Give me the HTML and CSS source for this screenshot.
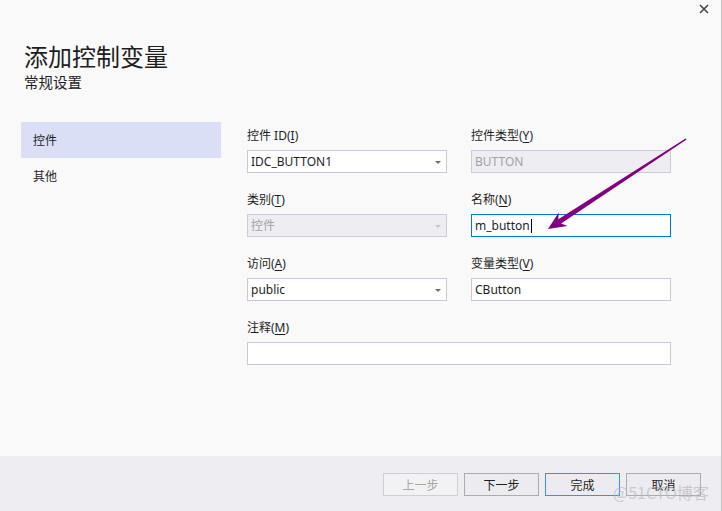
FILE: index.html
```html
<!DOCTYPE html>
<html lang="zh-CN">
<head>
    <meta charset="UTF-8">
    <meta name="viewport" content="width=device-width, initial-scale=1.0">
    <title>添加控制变量</title>
    <link rel="stylesheet" href="styles.css">
</head>
<body>
    <div class="dialog">
        <div class="titlebar">
            <svg class="close-icon" width="10" height="10" viewBox="0 0 10 10">
                <path d="M1 1 L9 9 M9 1 L1 9" stroke="#454545" stroke-width="1.6" fill="none"/>
            </svg>
        </div>

        <div class="header">
            <h1>添加控制变量</h1>
            <div class="subtitle">常规设置</div>
        </div>

        <div class="content">
            <ul class="nav">
                <li class="nav-item active">控件</li>
                <li class="nav-item">其他</li>
            </ul>

            <div class="form">
                <div class="field">
                    <label>控件 ID(<u>I</u>)</label>
                    <div class="input combo">IDC_BUTTON1<span class="caret"></span></div>
                </div>
                <div class="field">
                    <label>控件类型(<u>Y</u>)</label>
                    <div class="input disabled">BUTTON</div>
                </div>
                <div class="field">
                    <label>类别(<u>T</u>)</label>
                    <div class="input combo disabled">控件<span class="caret light"></span></div>
                </div>
                <div class="field">
                    <label>名称(<u>N</u>)</label>
                    <div class="input focused">m_button<span class="text-cursor"></span></div>
                </div>
                <div class="field">
                    <label>访问(<u>A</u>)</label>
                    <div class="input combo">public<span class="caret"></span></div>
                </div>
                <div class="field">
                    <label>变量类型(<u>V</u>)</label>
                    <div class="input">CButton</div>
                </div>
                <div class="field wide">
                    <label>注释(<u>M</u>)</label>
                    <div class="input"></div>
                </div>
            </div>
        </div>

        <div class="footer">
            <button class="btn" disabled>上一步</button>
            <button class="btn">下一步</button>
            <button class="btn btn-default">完成</button>
            <button class="btn">取消</button>
        </div>

        <!-- annotation arrow drawn over the screenshot -->
        <svg class="arrow" width="722" height="511" viewBox="0 0 722 511">
            <polygon points="548,229 567.5,225.9 561.1,223.5 686.6,139.6 685.6,138.4 558.3,219.3 558.7,212.5" fill="#800080"/>
        </svg>

        <div class="watermark">@51CTO博客</div>
    </div>
</body>
</html>
```

FILE: styles.css
```css
/* Page */
* {
    box-sizing: border-box;
}

body {
    margin: 0;
    background: #f9f9f9;
    font-family: "Segoe UI", "Noto Sans", "Noto Sans CJK SC", sans-serif;
    color: #1e1e1e;
}

.dialog {
    position: relative;
    width: 722px;
    height: 511px;
    display: flex;
    flex-direction: column;
    background: #f9f9f9;
    border-right: 1px solid #c6c6c6;
    overflow: hidden;
}

/* Title bar */
.titlebar {
    height: 41px;
    display: flex;
    justify-content: flex-end;
    align-items: flex-start;
    padding: 4px 12px 0 0;
}

/* Header */
.header {
    padding-left: 24px;
}

.header h1 {
    margin: 0;
    font-family: "Noto Sans CJK SC", sans-serif;
    font-size: 24px;
    font-weight: 400;
    line-height: 30px;
    color: #1e1e1e;
}

.subtitle {
    margin-top: 3px;
    font-family: "Noto Sans CJK SC", sans-serif;
    font-size: 14.5px;
    line-height: 16px;
    color: #1e1e1e;
}

/* Main content */
.content {
    flex: 1;
    display: flex;
    padding: 32px 0 0 21px;
}

.nav {
    list-style: none;
    margin: 0;
    padding: 0;
    width: 200px;
}

.nav-item {
    height: 36px;
    line-height: 36px;
    padding-left: 12px;
    font-family: "Noto Sans CJK SC", sans-serif;
    font-size: 12px;
    color: #1e1e1e;
}

.nav-item.active {
    background: #dadff6;
}

.form {
    margin-left: 26px;
    padding-top: 6px;
    display: grid;
    grid-template-columns: 200px 200px;
    column-gap: 24px;
    row-gap: 19px;
    align-content: start;
}

.field {
    display: flex;
    flex-direction: column;
}

.field.wide {
    grid-column: 1 / 3;
}

.field label {
    height: 16px;
    line-height: 16px;
    font-size: 12px;
    color: #1e1e1e;
    margin-bottom: 6px;
}

.field label u {
    text-underline-offset: 2px;
}

.input {
    position: relative;
    height: 23px;
    line-height: 21px;
    padding: 0 3px;
    background: #ffffff;
    border: 1px solid #cacad6;
    font-size: 12px;
    color: #1e1e1e;
    white-space: nowrap;
}

.input.disabled {
    background: #eeeef2;
    border-color: #cccbd8;
    color: #a2a2a8;
}

.input.focused {
    border-color: #0078d7;
}

.text-cursor {
    display: inline-block;
    width: 1px;
    height: 14px;
    margin-left: 1px;
    vertical-align: -3px;
    background: #000;
}

.caret {
    position: absolute;
    right: 5px;
    top: 10px;
    width: 0;
    height: 0;
    border-left: 3px solid transparent;
    border-right: 3px solid transparent;
    border-top: 3px solid #6d6d6d;
}

.caret.light {
    border-top-color: #c4c4cc;
}

/* Footer */
.footer {
    height: 55px;
    background: #eeeef2;
    display: flex;
    justify-content: flex-end;
    align-items: flex-start;
    gap: 6px;
    padding: 17px 20px 0 0;
}

.btn {
    width: 75px;
    height: 23px;
    padding: 0;
    background: #ececf0;
    border: 1px solid #acacac;
    font-family: "Noto Sans CJK SC", sans-serif;
    font-size: 12px;
    color: #1e1e1e;
}

.btn:disabled {
    background: #f2f2f4;
    border-color: #cfcfd4;
    color: #a6a6a6;
}

.btn-default {
    border-color: #3f8fe4;
}

/* Overlays */
.arrow {
    position: absolute;
    top: 0;
    left: 0;
    pointer-events: none;
}

.watermark {
    position: absolute;
    left: 613px;
    top: 480px;
    font-family: "Noto Sans CJK SC", sans-serif;
    font-size: 16px;
    color: rgba(185, 185, 190, 0.7);
    pointer-events: none;
}
```
